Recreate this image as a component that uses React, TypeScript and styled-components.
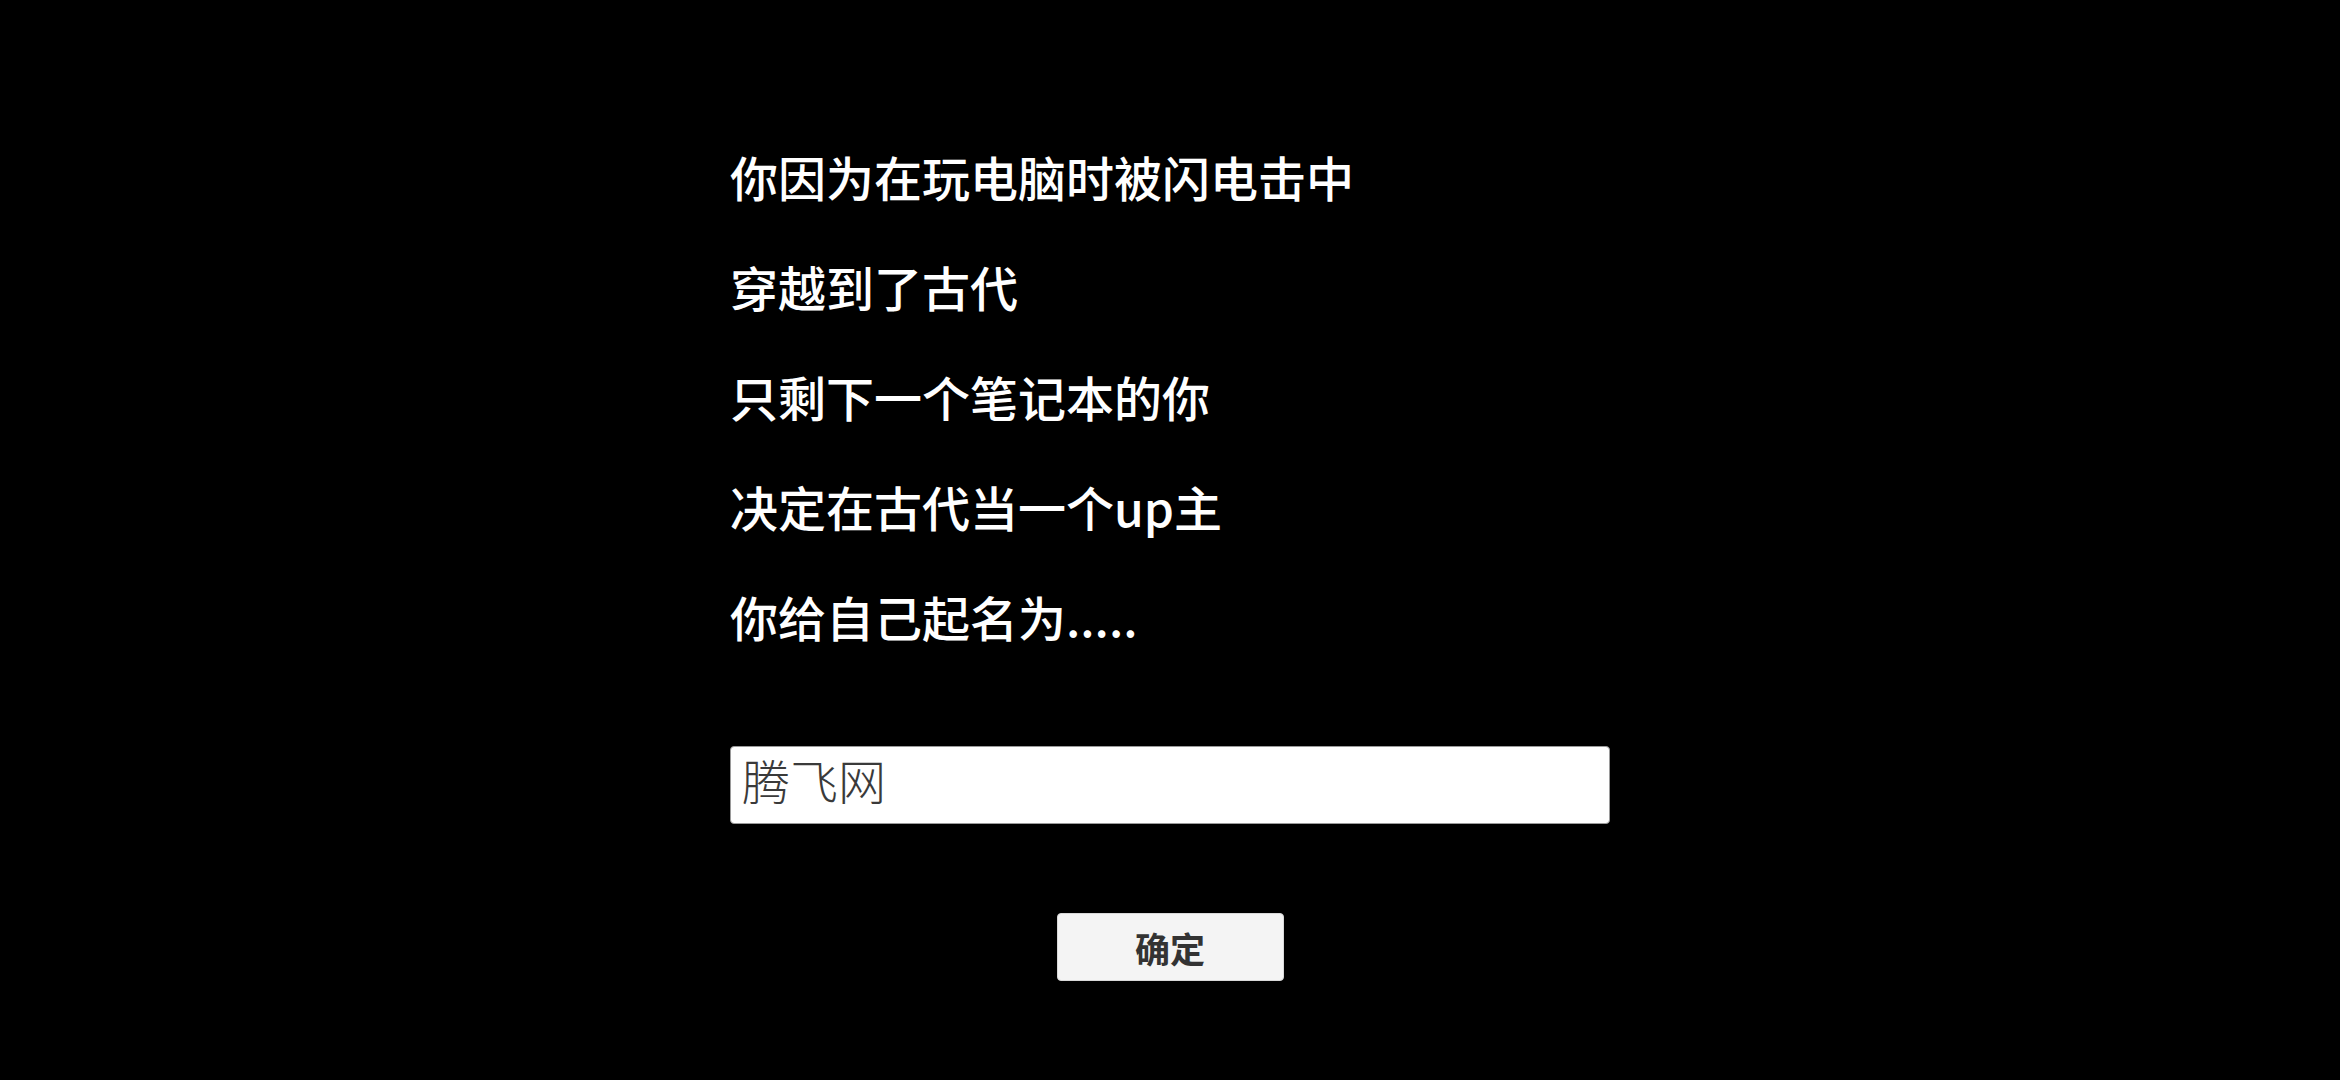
import React from "react";
import styled, { createGlobalStyle } from "styled-components";

const Global = createGlobalStyle`
  html, body {
    margin: 0;
    padding: 0;
    background: #000;
    height: 100%;
  }
  body {
    font-family: "Noto Sans CJK SC", "Noto Sans", sans-serif;
  }
`;

const Page = styled.div`
  width: 100%;
  min-height: 1080px;
  background: #000;
  display: flex;
  justify-content: center;
`;

const Column = styled.div`
  width: 880px;
  padding-top: 121px;
  display: flex;
  flex-direction: column;
`;

const Line = styled.p`
  margin: 0;
  height: 110px;
  line-height: 110px;
  color: #fff;
  font-size: 48px;
  font-weight: 500;
  white-space: nowrap;
`;

const NameInput = styled.input`
  margin-top: 75px;
  box-sizing: border-box;
  width: 880px;
  height: 78px;
  padding: 0 11px 12px;
  border: 1px solid #9a9a9a;
  border-radius: 4px;
  background: #fff;
  color: #3a3a3a;
  font-family: "Noto Sans CJK SC", "Noto Sans", sans-serif;
  font-size: 48px;
  font-weight: 300;
  outline: none;
`;

const Actions = styled.div`
  margin-top: 89px;
  display: flex;
  justify-content: center;
`;

const ConfirmButton = styled.button`
  box-sizing: border-box;
  width: 227px;
  height: 68px;
  border: 1px solid #d8d8d8;
  border-radius: 4px;
  background: #f4f4f4;
  color: #333;
  font-family: "Noto Sans CJK SC", "Noto Sans", sans-serif;
  font-size: 35px;
  font-weight: 700;
  cursor: pointer;
`;

const lines = [
  "你因为在玩电脑时被闪电击中",
  "穿越到了古代",
  "只剩下一个笔记本的你",
  "决定在古代当一个up主",
  "你给自己起名为.....",
];

export default function App() {
  return (
    <>
      <Global />
      <Page>
        <Column>
          {lines.map((t) => (
            <Line key={t}>{t}</Line>
          ))}
          <NameInput defaultValue="腾飞网" />
          <Actions>
            <ConfirmButton>确定</ConfirmButton>
          </Actions>
        </Column>
      </Page>
    </>
  );
}
